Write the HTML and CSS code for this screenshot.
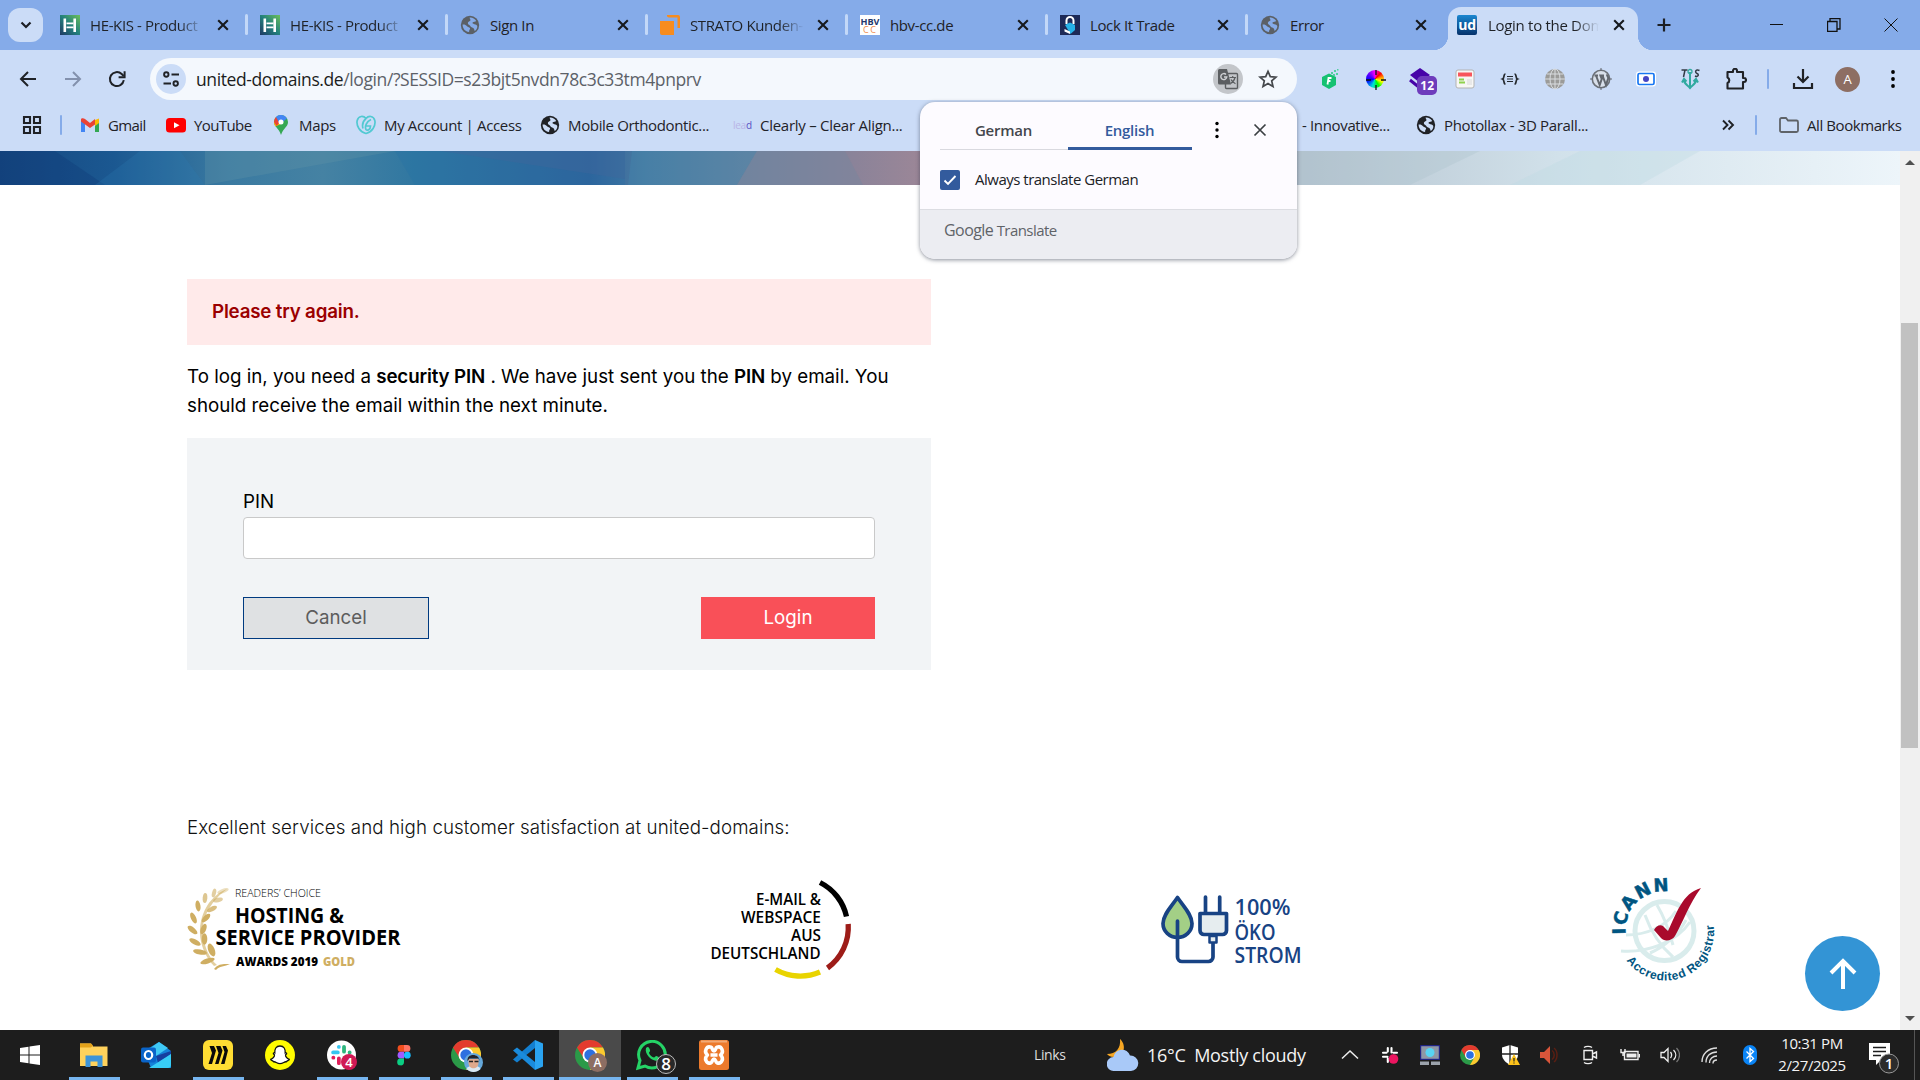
FILE: index.html
```html
<!DOCTYPE html>
<html lang="en">
<head>
<meta charset="utf-8">
<title>Login to the Domain Portfolio</title>
<link rel="stylesheet" href="styles.css">
</head>
<body>
<svg class="sprite" aria-hidden="true">
  <symbol id="x" viewBox="0 0 20 20"><path d="M5.2 5.2l9.6 9.6M14.8 5.2l-9.6 9.6" stroke="currentColor" stroke-width="2.1" fill="none"/></symbol>
  <symbol id="globe" viewBox="0 0 20 20"><circle cx="10" cy="10" r="9.2" fill="currentColor"/><path d="M2.6 9.6c1.8-.3 3.2.2 4.4 1.6 1.4 1.2 2.6.9 3.1 2.1.3 1.2-1.4 1.7-1 3.8-3.8-.3-6.6-3.500-6.500-7.500zM9.600 2.500c2.900-.2 5.200 1.100 6.600 3.400-1.100.9-2.500.4-3.400 1.400-.9.9.3 1.600 1.600 1.900 1.500.2 2.200.5 2.900 1.700.2 2-1 4-2.700 5.200-.3-1.900-.6-3.300-2.500-3.600-1.600-.4-1.400-1.900-2.800-2.600C8 9.200 7.400 8 8.300 6.900c1-1 2.200-.7 2.100-2 0-1-.8-1.300-.8-2.400z" fill="var(--hole)"/></symbol>
  <symbol id="chrome" viewBox="0 0 30 30"><circle cx="15" cy="15" r="15" fill="#2b9a48"/><path d="M2 7.500A15 15 0 0 1 28 7.500H15L9 18.700z" fill="#e33b2e"/><path d="M28 7.500A15 15 0 0 1 15 30l6.500-11.200L15 7.500z" fill="#fcc92f"/><circle cx="15" cy="15" r="7.500" fill="#fff"/><circle cx="15" cy="15" r="5.700" fill="#2d70e0"/></symbol>
  <symbol id="hekis" viewBox="0 0 20 20"><rect width="20" height="20" fill="url(#gHekis)"/><path d="M4.800 3.500v13.500M14.700 3.500v13.500" stroke="#fff" stroke-width="2.600"/><path d="M6.500 8.300h7M6.500 12.300h7" stroke="#fff" stroke-width="1.800"/></symbol>
  <symbol id="slack" viewBox="0 0 20 20"><g stroke-width="3.600" stroke-linecap="round" fill="none"><path d="M2 7.500h4.500M7.500 2.200v.1" stroke="#36c5f0"/><path d="M12.400 2.200v4.600M17.700 7.500h.1" stroke="#2eb67d"/><path d="M13.200 12.600h4.600M12.400 17.700v.1" stroke="#ecb22e"/><path d="M7.500 13.200v4.600M2.200 12.600h.1" stroke="#e01e5a"/></g></symbol>
  <linearGradient id="gHekis" x1="0" y1="1" x2="1" y2="0"><stop offset="0" stop-color="#1f3864"/><stop offset=".5" stop-color="#22807c"/><stop offset="1" stop-color="#6cc05a"/></linearGradient>
</svg>

<header class="browser">
  <div class="tabs">
    <button class="tab-search"><svg width="14" height="14" viewBox="0 0 14 14"><path d="M2.500 4.500L7 9l4.500-4.500" stroke="#1c1f24" stroke-width="2.200" fill="none"/></svg></button>
    <div class="tab"><svg class="fav"><use href="#hekis"/></svg><span class="tab-title fade">HE-KIS - Product</span><svg class="close"><use href="#x"/></svg></div>
    <div class="tab"><svg class="fav"><use href="#hekis"/></svg><span class="tab-title fade">HE-KIS - Product</span><svg class="close"><use href="#x"/></svg></div>
    <div class="tab"><svg class="fav grey"><use href="#globe"/></svg><span class="tab-title">Sign In</span><svg class="close"><use href="#x"/></svg></div>
    <div class="tab"><svg class="fav" viewBox="0 0 20 20"><path d="M0 6h14v14H2a2 2 0 0 1-2-2z" fill="#f78c1e"/><path d="M7 0h11a2 2 0 0 1 2 2v11h-2.500V2.500H9A2 2 0 0 1 7 0z" fill="#f78c1e"/></svg><span class="tab-title fade">STRATO Kunden-</span><svg class="close"><use href="#x"/></svg></div>
    <div class="tab"><svg class="fav" viewBox="0 0 20 20"><rect width="20" height="20" fill="#fff"/><text x="0.500" y="9.500" class="hbv" textLength="19" lengthAdjust="spacingAndGlyphs">HBV</text><text x="3" y="17.500" class="hcc" textLength="13">CC</text></svg><span class="tab-title">hbv-cc.de</span><svg class="close"><use href="#x"/></svg></div>
    <div class="tab"><svg class="fav" viewBox="0 0 20 20"><rect width="20" height="20" fill="#1d2a58"/><path d="M6.500 9V5.500a3.500 3.500 0 0 1 7 0V9" stroke="#fff" stroke-width="2" fill="none"/><path d="M5 10l5-2.500 5 2.500v5l-4.500 4z" fill="#27b2e8"/><path d="M4.500 14l5.500 2.500v2.500l-5.500-2.500z" fill="#fff"/></svg><span class="tab-title">Lock It Trade</span><svg class="close"><use href="#x"/></svg></div>
    <div class="tab no-sep"><svg class="fav grey"><use href="#globe"/></svg><span class="tab-title">Error</span><svg class="close"><use href="#x"/></svg></div>
    <div class="tab active"><span class="fav ud">ud</span><span class="tab-title fade">Login to the Dom</span><svg class="close"><use href="#x"/></svg></div>
    <svg class="new-tab" viewBox="0 0 20 20"><path d="M10 3.500v13M3.500 10h13" stroke="#1c1f24" stroke-width="2.200"/></svg>
    <div class="win">
      <svg width="14" height="14"><path d="M0 6.500h13" stroke="#111"/></svg>
      <svg width="14" height="14"><path d="M.5 3.500h9.500v10H.5zM3 3.500V.5h10v10.500h-3" stroke="#111" stroke-width="1.300" fill="none"/></svg>
      <svg width="14" height="14"><path d="M.5.5l13 13M13.500.5l-13 13" stroke="#111"/></svg>
    </div>
  </div>

  <div class="toolbar">
    <svg class="nav" viewBox="0 0 20 20"><path d="M18 10H3.500M10 3L3 10l7 7" stroke="#1f2227" stroke-width="2" fill="none"/></svg>
    <svg class="nav dim" viewBox="0 0 20 20"><path d="M2 10h14.500M10 3l7 7-7 7" stroke="#8391ad" stroke-width="2" fill="none"/></svg>
    <svg class="nav" viewBox="0 0 20 20"><path d="M16.800 11.200A7 7 0 1 1 14.700 5l2 2" stroke="#1f2227" stroke-width="2" fill="none"/><path d="M17.600 2.200v6h-6" stroke="#1f2227" stroke-width="2" fill="none"/></svg>
    <div class="omnibox">
      <span class="site-info"><svg width="18" height="18" viewBox="0 0 18 18"><g stroke="#202226" stroke-width="1.900" fill="none"><circle cx="4.300" cy="4.500" r="2.200"/><path d="M9.500 4.500H17M1.500 13.500H9"/><circle cx="13.700" cy="13.500" r="2.200"/></g></svg></span>
      <span class="url"><b>united-domains.de</b>/login/?SESSID=s23bjt5nvdn78c3c33tm4pnprv</span>
      <span class="translate"><svg width="22" height="22" viewBox="0 0 22 22"><rect x="8.500" y="5.500" width="12" height="15" rx="1" stroke="#5b5e61" stroke-width="1.400" fill="none"/><path d="M2.500 1h7.500l4 15.500H2.500A1.500 1.500 0 0 1 1 15V2.500A1.500 1.500 0 0 1 2.500 1z" fill="#5b5e61"/><path d="M9 6.500A3 3 0 1 0 9.800 9H7" stroke="#d0d2d5" stroke-width="1.400" fill="none"/><path d="M12.500 9.500h6.500M15.700 8v1.500M18 9.500c-.6 2.700-2.200 4.700-4.400 6M14 11.500c.7 1.800 2 3 4.500 4.200" stroke="#5b5e61" stroke-width="1.200" fill="none"/></svg></span>
      <svg width="20" height="20" viewBox="0 0 20 20"><path d="M10 2.300l2.300 5.300 5.700.5-4.300 3.800 1.300 5.600-5-3-5 3 1.300-5.600L2 8.100l5.700-.5z" fill="none" stroke="#45484c" stroke-width="1.700"/></svg>
    </div>
    <div class="exts">
      <svg class="ext" viewBox="0 0 22 22"><path d="M10 5.500l7 3.500v8l-7 4-7-4V9z" fill="#16c172"/><path d="M12.500 10H9.500l-1 6.500M8.500 13H11.500" stroke="#fff" stroke-width="1.800" fill="none"/><path d="M12 4h2v2h-2zM15 2h2v2h-2zM17 5h2v2h-2zM14 6h2v2h-2zM18 1h1.500v1.500H18z" fill="#52cfa0"/></svg>
      <span class="ext wheel"><svg width="20" height="20" viewBox="0 0 20 20"><path d="M10 0v5M10 15v5M0 10h5M15 10h5" stroke="#111" stroke-width="1.300"/></svg></span>
      <span class="ext stack"><svg width="22" height="22" viewBox="0 0 22 22"><path d="M11 0l10 7-10 8L1 7z" fill="#4704a8"/><path d="M1 12l10 8 4-3" stroke="#4704a8" stroke-width="3" fill="none"/></svg><i>12</i></span>
      <svg class="ext" viewBox="0 0 22 22"><rect x="2" y="2" width="18" height="18" rx="2" fill="#f7f7f5" stroke="#b3b3b3"/><path d="M4 4.500h14v4H4z" fill="#f7565c"/><path d="M5 11.500h5M5 14.500h6" stroke="#8fd14e" stroke-width="2"/><path d="M13 11h5v6h-5z" fill="#e8e8e8"/></svg>
      <svg class="ext" viewBox="0 0 22 22"><path d="M6.500 6C4 6 6 10 3.500 11c2.500 1 .5 5 3 5M15.500 6c2.500 0 .5 4 3 5-2.500 1-.5 5-3 5" stroke="#25292e" stroke-width="1.700" fill="none"/><path d="M8 8.500h6M8 11h6M8 13.500h6" stroke="#25292e" stroke-width="1.200"/></svg>
      <svg class="ext" viewBox="0 0 22 22"><circle cx="11" cy="11" r="10" fill="#9b9b99"/><g stroke="#d9dcdf" fill="none"><ellipse cx="11" cy="11" rx="5" ry="10"/><path d="M11 1v20M1 11h20M2.800 6h16.400M2.800 16h16.400"/></g></svg>
      <svg class="ext" viewBox="0 0 22 22"><circle cx="11" cy="11" r="8.700" fill="#d8dfe9" stroke="#6c7178" stroke-width="1.600"/><path d="M4.500 7.500h3.500M6 7.500l3.700 9.500 2-6-1.300-3.500h3.600M12.500 7.500l3.500 9.500 2.300-7c0-1.500-1.500-2-1.300-3.500" stroke="#62676e" stroke-width="2" fill="none"/><path d="M11 0v3M11 19v3M0 11h3M19 11h3" stroke="#62676e"/></svg>
      <svg class="ext" viewBox="0 0 22 22"><rect x="1" y="3.500" width="20" height="15" rx="3" fill="#fff"/><rect x="3" y="5.500" width="16" height="11" rx="1.500" fill="#fff" stroke="#1877f2" stroke-width="1.700"/><circle cx="11" cy="11" r="3" fill="#4545c4"/></svg>
      <svg class="ext" viewBox="0 0 22 22"><path d="M10 4v16M4 12c0 4 3.500 5 6 8 2.500-3 6-4 6-8M2 14.500L4 11l2.500 2.500M18 14.500L16 11l-2.500 2.500" stroke="#31aaa0" stroke-width="2" fill="none"/><circle cx="10" cy="3.500" r="2" fill="none" stroke="#31aaa0" stroke-width="1.300"/><path d="M1.500 2h6M5 2L3.500 9M19.500 2.500c-4-2-5 2-2.500 3s1 4-2 2.500" stroke="#333b46" stroke-width="1.500" fill="none"/></svg>
      <svg class="ext" viewBox="0 0 22 22"><path d="M2.500 4h5.500V2.800a2 2 0 0 1 4 0V4h6v6h1a2 2 0 0 1 0 4h-1v6.500H2.500V15a3 3 0 0 0 0-5.500z" fill="none" stroke="#202226" stroke-width="2.100" stroke-linejoin="round"/></svg>
    </div>
    <span class="bar"></span>
    <svg class="dl" viewBox="0 0 22 22"><path d="M11 1v12.500M5.500 8.500L11 14l5.500-5.500M2 15v5h18v-5" stroke="#202226" stroke-width="2.200" fill="none"/></svg>
    <span class="avatar">A</span>
    <svg class="kebab" viewBox="0 0 6 20"><circle cx="3" cy="3" r="1.900"/><circle cx="3" cy="10" r="1.900"/><circle cx="3" cy="17" r="1.900"/></svg>
  </div>

  <nav class="bookmarks">
    <svg class="apps" viewBox="0 0 20 20"><path d="M2 2h6v6H2zM12 2h6v6h-6zM2 12h6v6H2zM12 12h6v6h-6z" fill="none" stroke="#202226" stroke-width="2.100"/></svg>
    <span class="bar"></span>
    <a class="bm w1"><svg viewBox="0 0 20 20"><path d="M1 4.500v12.500h4V9z" fill="#4285f4"/><path d="M19 4.500v12.500h-4V9z" fill="#34a853"/><path d="M15 5l4-1.500V8l-4 3z" fill="#fbbc04"/><path d="M1 4.500C1 3 3.500 3 5 4l5 4 5-4v5.500L10 13 1 6.500z" fill="#ea4335"/></svg>Gmail</a>
    <a class="bm w2"><svg viewBox="0 0 20 20"><rect y="3" width="20" height="14.500" rx="3.500" fill="#f00"/><path d="M8 7.300l5.500 3L8 13.300z" fill="#fff"/></svg>YouTube</a>
    <a class="bm w3"><svg viewBox="0 0 20 20"><path d="M10 0a7 7 0 0 1 7 7c0 5-5 6-7 13-2-7-7-8-7-13a7 7 0 0 1 7-7z" fill="#34a853"/><path d="M4.500 11.500A7 7 0 0 1 3 7l7-1 2 2z" fill="#fbbc04"/><path d="M3 7a7 7 0 0 1 2-5l5 4-4.500 5z" fill="#ea4335"/><path d="M5 2a7 7 0 0 1 11 1.500L9 9z" fill="#4285f4"/><circle cx="10" cy="7" r="2.500" fill="#fff"/></svg>Maps</a>
    <a class="bm w4"><svg viewBox="0 0 20 20"><path d="M10 18.500C4 17 0 11 1.200 5.500 2.500.5 7.500.5 10 3.500c2.500-3 7.500-3 8.800 2C20 11 16 17 10 18.500zM10 3.500C7 6 6 10 7 13.500M10 11h4.500c0 4-3.500 5-4.500 3.500-1.500-3 .5-8 5-10" fill="none" stroke="#52c9d2" stroke-width="1.700"/></svg>My Account | Access</a>
    <a class="bm w5"><svg class="dark"><use href="#globe"/></svg>Mobile Orthodontic...</a>
    <a class="bm w6"><span class="lead">lea<em>d</em></span>Clearly – Clear Align...</a>
    <a class="bm w7">- Innovative...</a>
    <a class="bm w8"><svg class="dark"><use href="#globe"/></svg>Photollax - 3D Parall...</a>
    <svg class="more" viewBox="0 0 14 14"><path d="M2 2.500L6.500 7 2 11.500M7.500 2.500L12 7l-4.500 4.500" stroke="#202226" stroke-width="1.900" fill="none"/></svg>
    <span class="bar"></span>
    <a class="bm w9"><svg viewBox="0 0 20 20"><path d="M1 4.500A1.500 1.500 0 0 1 2.500 3H7l2 2.500h8.500A1.500 1.500 0 0 1 19 7v8.500a1.500 1.500 0 0 1-1.500 1.500h-15A1.500 1.500 0 0 1 1 15.500z" fill="none" stroke="#5f6368" stroke-width="1.800"/></svg>All Bookmarks</a>
  </nav>

  <section class="popup">
    <div class="popup-top">
      <div class="langs"><span>German</span><span class="on">English</span></div>
      <svg class="pk" viewBox="0 0 6 20"><circle cx="3" cy="3.500" r="1.700"/><circle cx="3" cy="10" r="1.700"/><circle cx="3" cy="16.500" r="1.700"/></svg>
      <svg class="px" viewBox="0 0 14 14"><path d="M1.500 1.500l11 11M12.500 1.500l-11 11" stroke="#3c3f43" stroke-width="1.700"/></svg>
    </div>
    <label class="always"><span class="check"><svg width="14" height="14" viewBox="0 0 14 14"><path d="M1.500 7.500L5 11l7.500-8" stroke="#fff" stroke-width="1.900" fill="none"/></svg></span><span>Always translate German</span></label>
    <footer><b>Google</b> Translate</footer>
  </section>
</header>

<main class="page">
  <div class="content">
    <svg class="banner" viewBox="0 0 1900 34" preserveAspectRatio="none">
      <defs><linearGradient id="sky"><stop offset="0" stop-color="#154780"/><stop offset=".06" stop-color="#1b5891"/><stop offset=".12" stop-color="#3a7aa1"/><stop offset=".17" stop-color="#4582a3"/><stop offset=".22" stop-color="#3077a1"/><stop offset=".31" stop-color="#30629a"/><stop offset=".34" stop-color="#4a7ba2"/><stop offset=".4" stop-color="#70839f"/><stop offset=".45" stop-color="#8b8399"/><stop offset=".49" stop-color="#9e8797"/><stop offset=".68" stop-color="#b5c3cf"/><stop offset=".82" stop-color="#d1e1ea"/><stop offset="1" stop-color="#edf5fa"/></linearGradient></defs>
      <rect width="1900" height="34" fill="url(#sky)"/>
      <path d="M0 0h55L105 34H0z" fill="#0c3675" opacity=".3"/>
      <path d="M140 0L95 34h110L180 0z" fill="#2c7cb2" opacity=".25"/>
      <path d="M205 0h190l-190 34z" fill="#5e91a7" opacity=".35"/>
      <path d="M395 0h230v34H415z" fill="#1e6fa6" opacity=".25"/>
      <path d="M440 0l185 28V0z" fill="#42669a" opacity=".4"/>
      <path d="M632 0h125l-20 34H628z" fill="#4387ac" opacity=".4"/>
      <path d="M757 0h88l18 34H737z" fill="#77859e" opacity=".5"/>
      <path d="M1300 0h180l-70 34h-110z" fill="#a9c0ca" opacity=".3"/>
      <path d="M1580 0h120l-60 34h-130z" fill="#bcd9e3" opacity=".35"/>
    </svg>
    <div class="login">
      <div class="alert">Please try again.</div>
      <p class="intro">To log in, you need a <b>security PIN</b> . We have just sent you the <b>PIN</b> by email. You should receive the email within the next minute.</p>
      <form class="pin-form">
        <label for="pin">PIN</label>
        <input id="pin" type="text">
        <div class="actions"><button type="button" class="cancel">Cancel</button><button type="button" class="go">Login</button></div>
      </form>
    </div>
    <p class="services">Excellent services and high customer satisfaction at united-domains:</p>
    <div class="awards">
      <svg class="aw1" width="220" height="90" viewBox="0 0 220 90">
        <g fill="#cfae62">
          <path d="M27 84C12 68 8 44 20 24 25 16 32 10 40 7 25 18 14 36 16 52c1 12 6 24 14 31z" fill="#e3cf9f"/>
          <ellipse cx="36" cy="9" rx="6" ry="2.200" transform="rotate(-20 36 9)" opacity=".4"/>
          <ellipse cx="27" cy="11" rx="2" ry="4.500" transform="rotate(15 27 11)" opacity=".6"/>
          <ellipse cx="31" cy="18" rx="5" ry="2.200" transform="rotate(-15 31 18)" opacity=".6"/>
          <ellipse cx="18" cy="16" rx="2.300" ry="5" transform="rotate(5 18 16)" opacity=".7"/>
          <ellipse cx="25" cy="27" rx="5.500" ry="2.400" transform="rotate(-28 25 27)" opacity=".8"/>
          <ellipse cx="11" cy="24" rx="2.500" ry="5.500" transform="rotate(-8 11 24)"/>
          <ellipse cx="19" cy="36" rx="5.500" ry="2.600" transform="rotate(-45 19 36)"/>
          <ellipse cx="6.500" cy="36" rx="2.600" ry="5.800" transform="rotate(-25 6.500 36)"/>
          <ellipse cx="16.500" cy="47" rx="2.700" ry="5.500" transform="rotate(22 16.500 47)"/>
          <ellipse cx="5.500" cy="48" rx="2.600" ry="6" transform="rotate(-50 5.500 48)"/>
          <ellipse cx="17.500" cy="57" rx="2.800" ry="5.800"/>
          <ellipse cx="8" cy="60" rx="2.600" ry="6.300" transform="rotate(-62 8 60)"/>
          <ellipse cx="24.500" cy="68" rx="3.200" ry="6.800" transform="rotate(-22 24.500 68)"/>
          <ellipse cx="13" cy="70" rx="2.600" ry="7" transform="rotate(-80 13 70)"/>
          <ellipse cx="20.500" cy="79" rx="7.500" ry="2.500" transform="rotate(-18 20.500 79)"/>
          <path d="M27 87c5-6 10-5 16-5-5 2.500-11 2-14 6z"/>
        </g>
        <text x="48" y="15" class="rc" textLength="86" lengthAdjust="spacingAndGlyphs">READERS’ CHOICE</text>
        <text x="48" y="41" class="hs" textLength="109" lengthAdjust="spacingAndGlyphs">HOSTING &amp;</text>
        <text x="28.500" y="63" class="hs" textLength="185" lengthAdjust="spacingAndGlyphs">SERVICE PROVIDER</text>
        <text x="49" y="84" class="ay" textLength="82" lengthAdjust="spacingAndGlyphs">AWARDS 2019</text>
        <text x="136" y="84" class="ay gold" textLength="32" lengthAdjust="spacingAndGlyphs">GOLD</text>
      </svg>
      <svg class="aw2" width="150" height="110" viewBox="705 875 150 110">
        <g class="mail">
          <text x="756" y="904.500" textLength="65" lengthAdjust="spacingAndGlyphs">E-MAIL &amp;</text>
          <text x="741" y="922.500" textLength="80" lengthAdjust="spacingAndGlyphs">WEBSPACE</text>
          <text x="791" y="940.500" textLength="30" lengthAdjust="spacingAndGlyphs">AUS</text>
          <text x="710.500" y="958.500" textLength="110" lengthAdjust="spacingAndGlyphs">DEUTSCHLAND</text>
        </g>
        <g fill="none" stroke-width="5.300"><path d="M820 882.500A50 50 0 0 1 846.500 916.500" stroke="#000"/><path d="M848.200 924A50 50 0 0 1 827.500 968" stroke="#9d1c18"/><path d="M775.500 969.500A50 50 0 0 0 820 972" stroke="#e9d400"/></g>
      </svg>
      <svg class="aw3" width="150" height="80" viewBox="1155 890 150 80">
        <g fill="none" stroke="#184384" stroke-width="3.700" stroke-linejoin="round" stroke-linecap="round">
          <path d="M1177.500 897.500c6 9 14.500 17 14.500 26a14.500 14 0 0 1-29 0c0-9 8.500-17 14.500-26z" fill="#a3cf86"/>
          <path d="M1177.500 921v36a4.500 4.500 0 0 0 4.500 4.500h26.500a4.500 4.500 0 0 0 4.500-4.500v-14"/>
          <path d="M1205.500 897v15M1219.700 897v15"/>
          <path d="M1200 913.500h26.500v17a4 4 0 0 1-4 4H1204a4 4 0 0 1-4-4z" fill="#e6edef"/>
          <path d="M1209.500 936h7v6.500h-7z" fill="#e6edef" stroke-width="2.500"/>
        </g>
        <g class="oko">
          <text x="1234.500" y="915" textLength="56" lengthAdjust="spacingAndGlyphs">100%</text>
          <text x="1234.500" y="939.500" textLength="41" lengthAdjust="spacingAndGlyphs">ÖKO</text>
          <text x="1234.500" y="963" textLength="67" lengthAdjust="spacingAndGlyphs">STROM</text>
        </g>
      </svg>
      <svg class="aw4" width="110" height="110" viewBox="1608 875 110 110">
        <circle cx="1664.500" cy="931" r="29.500" fill="none" stroke="#d9ecec" stroke-width="5"/>
        <g fill="none" stroke="#d9ecec" stroke-width="3"><path d="M1621 951c25 2 55-8 69-29M1626 935c20 0 40-8 50-24M1645 915c5 14 14 30 28 42M1657 905c6 10 12 25 16 40M1650 953c14-6 28-18 36-33"/></g>
        <path d="M1654 930c2-4 6-6 9-4l5 5c8-16 14-38 33-43-12 16-18 34-26 48-3 5-11 6-14 2z" fill="#a90a2c"/>
        <path id="arcTop" d="M1625.700 934.500A38.500 38.500 0 0 1 1699 914" fill="none"/>
        <path id="arcBottom" d="M1626.500 960.500A48.300 48.300 0 0 0 1711.500 917" fill="none"/>
        <text class="icann"><textPath href="#arcTop">ICANN</textPath></text>
        <text class="accr"><textPath href="#arcBottom">Accredited Registrar</textPath></text>
      </svg>
    </div>
    <button class="to-top"><svg width="30" height="32" viewBox="0 0 30 32"><path d="M15 31V3M3 15L15 3l12 12" stroke="#fff" stroke-width="4" fill="none"/></svg></button>
  </div>
  <div class="scrollbar"><i class="up"></i><i class="thumb"></i><i class="down"></i></div>
</main>

<footer class="taskbar">
  <div class="task"><svg width="20" height="20" viewBox="0 0 20 20"><path d="M0 3l8.500-1.300v7.800H0zM9.500 1.500L20 0v9.500H9.500zM0 10.500h8.500v7.800L0 17zM9.500 10.500H20V20L9.500 18.500z" fill="#fff"/></svg></div>
  <div class="task run"><svg viewBox="0 0 30 30"><path d="M1 5V3.500h11l2 3h14.500V26H1z" fill="#ffd25c"/><path d="M1 3.500h11l2 2-2 2H1z" fill="#e3a21a"/><path d="M6.500 27V15.500h17V27h-5v-5.500h-7V27z" fill="#3d94d8"/></svg></div>
  <div class="task"><svg viewBox="0 0 30 30"><path d="M3 11L18 2l12 9v17H10z" fill="#1482d8"/><path d="M8 9l10-7 9 6-12 8z" fill="#3fc8f4"/><path d="M15 16l15-5v3L17 23z" fill="#163f9e"/><path d="M8 28l22-14v11a3 3 0 0 1-3 3z" fill="#38cdf5"/><rect y="7.500" width="15" height="15" rx="2" fill="#0a64c8"/><ellipse cx="7.500" cy="15" rx="3.700" ry="4" fill="none" stroke="#fff" stroke-width="2.200"/></svg></div>
  <div class="task run"><svg viewBox="0 0 30 30"><rect width="30" height="30" rx="6" fill="#ffdd33"/><path d="M6.500 6h4.500l2 4.500L9 24H5.500L9 13zM13 6h4.500l2 4.500L15.500 24H12l3.500-11zM19.500 6H23l2 4.500L21.500 24h-3.500L21.500 12z" fill="#0a0a0a"/></svg></div>
  <div class="task"><svg viewBox="0 0 30 30"><circle cx="15" cy="15" r="15" fill="#fffc00"/><path d="M15 6c-4 0-5.500 3-5.200 7-1.500-.5-2.300.8-.3 1.800 0 3-2.500 4-3.800 4.500.3 1.300 2.500 1.200 3 2.500 2-.5 3 1.800 6.300 1.800s4.300-2.300 6.300-1.800c.5-1.300 2.700-1.200 3-2.500-1.300-.5-3.800-1.500-3.800-4.500 2-1 1.200-2.300-.3-1.800C20.500 9 19 6 15 6z" fill="#fff" stroke="#111" stroke-width="1.300"/></svg></div>
  <div class="task run"><svg viewBox="0 0 30 30"><circle cx="14.500" cy="15" r="14.500" fill="#fff"/><use href="#slack" x="4" y="4.500" width="21" height="21"/><circle cx="22" cy="22" r="8" fill="#d01955"/><text x="22" y="26.500" class="badge">4</text></svg></div>
  <div class="task run"><svg viewBox="0 0 30 30"><path d="M15 5h-3a3.400 3.400 0 0 0 0 6.800h3z" fill="#f24e1e"/><path d="M15 5h3a3.400 3.400 0 0 1 0 6.800h-3z" fill="#ff7262"/><path d="M15 11.800h-3a3.400 3.400 0 0 0 0 6.800h3z" fill="#a259ff"/><circle cx="18.300" cy="15.200" r="3.400" fill="#1abcfe"/><path d="M15 18.600h-3a3.400 3.400 0 1 0 3 3.400z" fill="#0acf83"/></svg></div>
  <div class="task run"><svg class="cr" viewBox="0 0 32 32"><use href="#chrome" width="30" height="30"/><circle cx="22.500" cy="22.500" r="9.500" fill="#65a8da"/><path d="M15.500 29c3-5 11-5 14 0-4 4-10 4-14 0z" fill="#dbe8f2"/><path d="M17.500 19h10v4c0 7-10 7-10 0z" fill="#e0a98c"/><path d="M16.500 21c-1-8 12-8 12 0l-1-2.500h-9z" fill="#23242c"/><path d="M18 21.500h4M23.500 21.500h4" stroke="#222" stroke-width="1.300"/></svg></div>
  <div class="task run"><svg viewBox="0 0 30 30"><path d="M22 0l8 3.500v23L22 30z" fill="#2aa3f0"/><path d="M22 0v8L4 22.500 0 19.500z" fill="#137fd0"/><path d="M22 30v-8L4 7.500 0 10.500z" fill="#1a8bdc"/></svg></div>
  <div class="task run on"><svg class="cr" viewBox="0 0 32 32"><use href="#chrome" width="30" height="30"/><circle cx="22.500" cy="22.500" r="9.500" fill="#8d6e63"/><text x="22.500" y="26.800" class="badge ba">A</text></svg></div>
  <div class="task run"><svg class="wa" viewBox="0 0 40 34"><path d="M2 28l2-7.500a13.300 13.300 0 1 1 5 5.500z" fill="none" stroke="#25d366" stroke-width="3"/><path d="M10 8c2-2 3-1 4 2 .5 1.500-1 2-1 3 1 2.500 3 4 5 4.500 1 0 1.500-2 2.500-1.500 3 1 3.500 2 1.500 4-4 3-14-5-12-12z" fill="#25d366"/><circle cx="30" cy="24" r="9.500" fill="#292929" stroke="#bbb"/><text x="30" y="30" class="badge b8">8</text></svg></div>
  <div class="task run"><svg viewBox="0 0 30 30"><rect width="30" height="30" rx="2.500" fill="#ec7a2c"/><path d="M2 1.500h26" stroke="#f3ab76" stroke-width="2"/><path d="M12 7.200C7.500 5.500 4.500 11.500 8.500 15c-4 3.500-1 9.500 3.500 7.800 1.700-.8 1.300-3.800 3-3.800s1.300 3 3 3.800c4.500 1.700 7.500-4.300 3.500-7.800 4-3.500 1-9.500-3.500-7.800-1.700.8-1.300 3.800-3 3.800s-1.300-3-3-3.800zM11.500 15h7" fill="none" stroke="#fff" stroke-width="3.500" stroke-linejoin="round"/></svg></div>

  <span class="links">Links</span>
  <svg class="weather" viewBox="0 0 32 32"><path d="M13 0c6 5 6 17-6 18-4 0-6-2-7-3C9 15 14 9 13 0z" fill="#f6a623"/><path d="M7 32a7 7 0 0 1-.5-14 8.500 8.500 0 0 1 16.500-1.500A7.700 7.700 0 0 1 24 32z" fill="#a9c9f8"/></svg>
  <span class="temp">16°C&nbsp; Mostly cloudy</span>
  <div class="tray">
    <svg viewBox="0 0 20 20"><path d="M2 13.500L10 6l8 7.500" stroke="#eee" stroke-width="1.500" fill="none"/></svg>
    <svg viewBox="0 0 20 20"><path d="M3 7.800h3.500M7.800 3v3.500M11.500 3v4.500M13.500 7.800H17M3 11.800h4.500M7.800 13.500V17" stroke="#fff" stroke-width="2.100" stroke-linecap="round"/><circle cx="13.500" cy="14" r="4.800" fill="#ec1560"/></svg>
    <svg viewBox="0 0 20 20"><rect x=".7" y=".7" width="18.600" height="13.600" fill="#8f98a5" stroke="#1b1f94"/><circle cx="10" cy="7.500" r="4.500" fill="#58d4f3"/><path d="M0 16.500h9v3.500H0zM11 16.500h9v3.500h-9z" fill="#9ca3ac"/></svg>
    <svg><use href="#chrome"/></svg>
    <svg viewBox="0 0 20 20"><path d="M10 0l8 2.500v7c0 5-4 8-8 10.500C6 17.500 2 14.500 2 9.500v-7z" fill="#fff"/><path d="M10 0v20M2 9h16" stroke="#222" stroke-width="1.300"/><path d="M14 9l6 11H8z" fill="#fcc21b"/><path d="M14 13v3.500M14 17.500v1" stroke="#222" stroke-width="1.200"/></svg>
    <svg viewBox="0 0 20 20"><path d="M0 7h4l6-6v18l-6-6H0z" fill="#d9553a"/><path d="M12 5.500c3 2 3 7 0 9M14 3c4 3 4 11 0 14" stroke="#5a1e12" stroke-width="1.500" fill="none"/></svg>
    <svg viewBox="0 0 20 20"><path d="M4 5.500h8.500v9H4zM12.500 9l4-2v6l-4-2M4 2.500c2-1.500 6-1.500 8 0M4 17.500c2 1.500 6 1.500 8 0" stroke="#eee" stroke-width="1.400" fill="none"/></svg>
    <svg viewBox="0 0 20 20"><path d="M4.500 6.500H18v8H4.500zM1 4v3.500h4V4M3 7.500V11" stroke="#eee" stroke-width="1.400" fill="none"/><path d="M6.500 8.500h10v4h-10zM18.500 9H20v3.500h-1.500z" fill="#eee"/></svg>
    <svg viewBox="0 0 20 20"><path d="M1 7.500h3l4-4v13l-4-4H1z" stroke="#eee" stroke-width="1.300" fill="none"/><path d="M10.500 7c1.500 2 1.500 4 0 6M13.500 5c3 3 3 7 0 10" stroke="#eee" stroke-width="1.300" fill="none"/><path d="M16.500 3c4 4 4 10 0 14" stroke="#777" stroke-width="1.300" fill="none"/></svg>
    <svg viewBox="0 0 20 20"><path d="M2 17C2 9 8 3 17 3M6 17.500C6 11 10.500 7 17 7M9.500 18c0-4 3-7 7.500-7M13 18.500c0-2 1.500-3.500 4-3.500" stroke="#ddd" stroke-width="1.400" fill="none"/></svg>
    <svg viewBox="0 0 20 20"><rect x="3" width="14" height="20" rx="7" fill="#0a84f5"/><path d="M6.500 6.500l7 7-3.500 3V3.500l3.500 3-7 7" stroke="#fff" stroke-width="1.300" fill="none"/></svg>
  </div>
  <div class="clock"><span>10:31 PM</span><span>2/27/2025</span></div>
  <svg class="notif" viewBox="0 0 32 32"><path d="M1 1h21v17h-9l-5 5v-5H1z" fill="#fff"/><path d="M5 5.500h13M5 9.500h13M5 13.500h8" stroke="#1d1d1d" stroke-width="1.600"/><circle cx="21" cy="21.500" r="9.500" fill="#2c2c2c" stroke="#999"/><text x="21" y="27" class="badge b1">1</text></svg>
  <span class="peek"></span>
</footer>
</body>
</html>
```
FILE: styles.css
```css
* { box-sizing: border-box; }
body { margin: 0; width: 1920px; height: 1080px; overflow: hidden; display: flex; flex-direction: column; background: #fff; font-family: Inter, sans-serif; }
svg { display: block; flex: none; }
button { font: inherit; padding: 0; border: 0; }
.sprite { position: absolute; width: 0; height: 0; }

/* browser chrome */
.browser { position: relative; height: 151px; flex: none; background: #cbdcf7; font: 15px/20px "Open Sans", sans-serif; letter-spacing: -.35px; color: #1f2227; }
.tabs { height: 50px; background: #85abe9; display: flex; align-items: flex-start; padding-left: 8px; }
.tab-search { width: 35px; height: 34px; margin: 8px 5px 0 0; border-radius: 12px; background: #cbdcf7; display: grid; place-items: center; }
.tab { position: relative; width: 200px; height: 50px; padding: 0 15px 0 12px; display: flex; align-items: center; }
.tab::after { content: ""; position: absolute; right: 0; top: 14px; width: 3px; height: 21px; border-radius: 2px; background: #c3d8f8; }
.tab.no-sep::after { display: none; }
.fav { width: 20px; height: 20px; margin-right: 10px; flex: none; }
.grey { color: #5b6066; --hole: #85abe9; }
.dark { color: #202226; --hole: #cbdcf7; }
.tab-title { width: 114px; white-space: nowrap; overflow: hidden; margin-top: -1px; letter-spacing: -.38px; }
.fade { mask-image: linear-gradient(90deg, #000 78%, transparent 100%); }
.close { width: 20px; height: 20px; margin-left: auto; color: #16191d; }
.tab.no-sep .close { margin-right: 2px; }
.hbv { font: bold 9.500px "Open Sans"; fill: #24376b; letter-spacing: 0; }
.hcc { font: 9px "Open Sans"; fill: #f08b4b; letter-spacing: 0; }
.ud { background: linear-gradient(#1b87d0, #06326b); color: #fff; font: bold 14px/19px "Open Sans"; text-align: center; border-radius: 2px; }
.tab.active { width: 190px; height: 43px; margin-top: 7px; background: #cbdcf7; border-radius: 13px 13px 0 0; padding: 0 9px 7px 9px; }
.tab.active::after, .tab.active::before { content: ""; display: block; position: absolute; top: auto; bottom: 0; width: 15px; height: 15px; border-radius: 0; }
.tab.active::before { left: -15px; background: radial-gradient(circle at 0 0, transparent 15px, #cbdcf7 15.500px); }
.tab.active::after { right: -15px; background: radial-gradient(circle at 100% 0, transparent 15px, #cbdcf7 15.500px); }
.tab.active .tab-title { width: 111px; margin-left: 1px; letter-spacing: -.3px; }
.new-tab { width: 20px; height: 20px; margin: 15px 0 0 16px; }
.win { display: flex; gap: 43px; margin: 18px 22px 0 auto; }

.toolbar { height: 58px; padding: 0 24px 0 18px; display: flex; align-items: center; }
.nav { width: 20px; height: 20px; margin-right: 25px; }
.nav:nth-child(3) { margin: 0 23px 0 -1px; }
.omnibox { width: 1147px; height: 42px; border-radius: 21px; background: #f4f8fd; display: flex; align-items: center; padding: 0 19px 0 6px; margin-top: -1px; }
.site-info { width: 30px; height: 30px; border-radius: 50%; background: #cbdcf7; display: grid; place-items: center; }
.url { margin-left: 10px; flex: 1; font-size: 17.500px; line-height: 24px; letter-spacing: -.4px; color: #5c6168; }
.url b { font-weight: 400; color: #1b1d21; }
.translate { width: 30px; height: 30px; border-radius: 50%; background: #c3c6ca; display: grid; place-items: center; margin-right: 15px; }
.exts { display: flex; gap: 23.100px; margin-left: 22px; align-items: center; }
.ext { width: 22px; height: 22px; }
.wheel { display: grid; place-items: center; border: 2px solid transparent; border-radius: 50%; background: conic-gradient(#f0f, red 45deg, orange 80deg, #ff0 110deg, #0f0 150deg, #0dd 200deg, #00f 260deg, #60f 310deg, #f0f) padding-box; }
.stack { position: relative; }
.stack i { position: absolute; left: 8px; top: 8px; width: 20px; height: 19px; border-radius: 5px; background: #6e3cbc; color: #fff; font: bold 12px/19px "Open Sans"; text-align: center; letter-spacing: 0; }
.bar { width: 2px; height: 20px; border-radius: 1px; background: #85abe9; flex: none; }
.toolbar .bar { margin: 0 23px 0 20px; }
.dl { width: 22px; height: 22px; }
.avatar { width: 25px; height: 25px; border-radius: 50%; background: #8d6e63; color: #fff; font-size: 13px; line-height: 25px; text-align: center; margin: 0 auto 0 21px; }
.kebab { width: 6px; height: 20px; }

.bookmarks { height: 36px; display: flex; align-items: center; padding-left: 22px; line-height: 18px; padding-bottom: 2px; }
.apps { width: 20px; height: 20px; }
.bookmarks .bar { margin: 0 18px; }
.bm { display: flex; align-items: center; gap: 8px; white-space: nowrap; flex: none; }
.bm svg { width: 20px; height: 20px; }
.w1 { width: 86px; } .w2 { width: 105px; } .w3 { width: 85px; } .w4 { width: 184px; }
.w1, .w2 { letter-spacing: -.6px; }
.w5 { width: 193px; } .w6 { width: 569px; } .w7 { width: 114px; } .w8 { width: 305px; }
.w9 { letter-spacing: -.42px; }
.lead { width: 19px; font-size: 10px; color: #b9b4e6; }
.lead em { color: #5a4fc4; font-style: normal; }
.w6 { letter-spacing: -.27px; }
.more { width: 14px; height: 14px; }
.bookmarks .more + .bar { margin: 0 22px 0 20px; }

/* translate bubble */
.popup { position: absolute; left: 920px; top: 102px; width: 377px; height: 157px; border-radius: 15px; overflow: hidden; background: #fdfbff; box-shadow: 0 1px 4px rgba(40, 50, 70, .55); z-index: 5; color: #202226; }
.popup-top { display: flex; align-items: center; height: 56px; padding-left: 20px; }
.langs { display: flex; align-self: flex-start; height: 48px; width: 252px; font-weight: 600; letter-spacing: -.25px; color: #44474c; }
.langs span { flex: 1 0 128px; line-height: 56px; text-align: center; border-bottom: 1px solid #d9d9df; padding-right: 1px; }
.langs .on { flex: 1 0 124px; color: #335b9d; border-bottom: 3px solid #335b9d; }
.pk { width: 6px; height: 20px; margin-left: 22px; }
.px { width: 14px; height: 14px; margin-left: 33px; }
.always { display: flex; align-items: center; height: 44px; padding-left: 20px; gap: 15px; letter-spacing: -.5px; line-height: 18px; }
.always span + span { margin-top: -2px; }
.check { width: 20px; height: 20px; border-radius: 2px; background: #335b9d; display: grid; place-items: center; }
.popup footer { margin-top: 7px; height: 50px; padding: 10px 24px; border-top: 1px solid #dcdde2; background: #ecedf2; color: #5f6368; letter-spacing: -.55px; }
.popup footer b { font-weight: 500; font-size: 16px; }

/* page */
.page { display: flex; height: 879px; flex: none; }
.content { position: relative; width: 1900px; font-size: 18.750px; color: #000; }
.banner { width: 1900px; height: 34px; }
.login { width: 744px; margin: 94px 0 0 187px; }
.alert { height: 66px; padding: 0 25px; line-height: 65px; background: #ffeaea; color: #9b0000; font-weight: 600; letter-spacing: -.2px; }
.intro { margin: 17px 0 18px; line-height: 29px; }
.intro b { font-weight: 600; letter-spacing: -.15px; }
.pin-form { height: 232px; padding: 50px 56px 0; background: #f2f4f6; }
.pin-form label { display: block; line-height: 28px; }
.pin-form input { display: block; width: 632px; height: 42px; margin-top: 1px; border: 1px solid #c9c9c9; border-radius: 4px; background: #fff; }
.actions { display: flex; justify-content: space-between; margin-top: 38px; }
.actions button { height: 42px; padding-bottom: 2px; }
.cancel { width: 186px; background: #dfe1e3; border: 1px solid #003a80; color: #5d5d5d; }
.go { width: 174px; background: #f95058; color: #fff; }
.services { margin: 144px 0 0 187px; line-height: 28px; font-weight: 300; letter-spacing: .08px; color: #111; }
.awards { display: flex; margin: 33px 0 0 187px; height: 110px; }
.aw1 { margin-top: 7px; width: 220px; }
.aw2 { margin-left: 298px; }
.aw3 { margin: 15px 0 0 300px; }
.aw4 { margin: 0 0 0 303px; }
.rc { font: 300 11.500px "Open Sans"; }
.hs { font: bold 22px "Open Sans"; }
.ay { font: 800 11.500px "Open Sans"; }
.gold { fill: #cfae62; }
.mail { font: 600 17px "Open Sans"; }
.oko { font: 600 22px "Open Sans"; fill: #184384; }
.icann { font: bold 18px "DejaVu Sans"; fill: #005581; stroke: #005581; stroke-width: .5px; letter-spacing: 1.500px; }
.accr { font: bold 12px "Liberation Sans"; fill: #005581; letter-spacing: .550px; }
.to-top { position: absolute; left: 1805px; top: 785px; width: 75px; height: 75px; border-radius: 50%; background: #3394d5; display: grid; place-items: center; }
.scrollbar { width: 20px; padding-right: 1px; background: #f0f0f0; display: flex; flex-direction: column; align-items: center; }
.scrollbar .up { border: 5px solid transparent; border-top: 0; border-bottom-color: #505050; margin-top: 9px; }
.scrollbar .thumb { width: 17px; height: 425px; background: #c1c1c1; margin-top: 158px; }
.scrollbar .down { border: 5px solid transparent; border-bottom: 0; border-top-color: #505050; margin: auto 0 9px; }

/* taskbar */
.taskbar { height: 50px; flex: none; background: #1d1d1d; color: #f4f4f4; display: flex; align-items: center; font: 18px/24px "Open Sans", sans-serif; }
.task { width: 62px; height: 50px; display: grid; place-items: center; position: relative; flex: none; }
.task:first-child { width: 63px; padding-right: 3px; }
.task svg:not([width]) { width: 30px; height: 30px; }
.task svg.cr { width: 32px; height: 32px; margin: 2px 0 0 2px; }
.task svg.wa { width: 40px; height: 34px; margin: 3px 0 0 7px; }
.task.run::after { content: ""; position: absolute; left: 6px; bottom: 0; width: 51px; height: 3px; background: #76b5ef; }
.task.on { background: #4a4a4a; }
.task.run.on::after { left: 0; width: 62px; }
.badge { font: 600 13px "Open Sans"; fill: #fff; text-anchor: middle; }
.ba { font-size: 12px; }
.b8 { font-size: 17px; }
.b1 { font-size: 15px; }
.links { font-size: 14px; letter-spacing: -.4px; margin-left: 289px; width: 73px; color: #ddd; }
.weather { width: 32px; height: 32px; }
.temp { width: 191px; margin-left: 8px; letter-spacing: -.3px; white-space: nowrap; }
.tray { display: flex; gap: 20px; margin-left: 2px; }
.tray svg { width: 20px; height: 20px; }
.clock { display: flex; flex-direction: column; width: 84px; margin: -2px 0 0 10px; font-size: 15px; line-height: 22.500px; letter-spacing: -.4px; text-align: center; }
.notif { width: 32px; height: 32px; margin: 6px 0 0 14px; }
.peek { width: 1px; height: 50px; background: #555; margin-left: 14px; }
```
